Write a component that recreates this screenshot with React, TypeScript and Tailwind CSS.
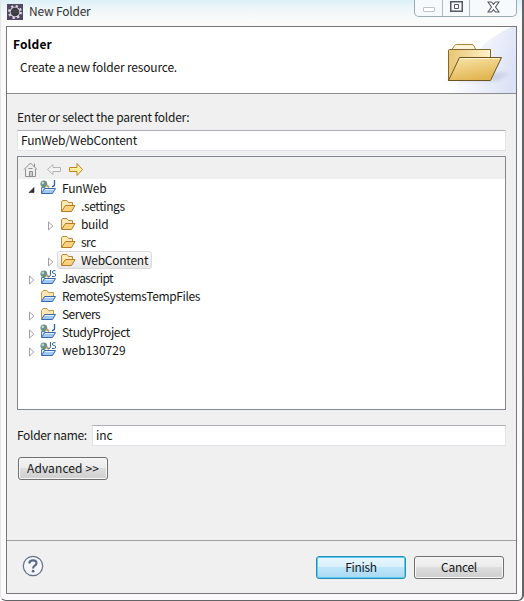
import type { ReactNode } from 'react';

type Kind = 'folder' | 'open' | 'J' | 'JS';
type Row = { name: string; kind: Kind; arrow: 'open' | 'closed' | 'none'; child?: boolean; selected?: boolean; spacing: string };

const rows: Row[] = [
  { name: 'FunWeb', kind: 'J', arrow: 'open', spacing: 'tracking-[-0.2px]' },
  { name: '.settings', kind: 'folder', arrow: 'none', child: true, spacing: 'tracking-[-0.4px]' },
  { name: 'build', kind: 'folder', arrow: 'closed', child: true, spacing: 'tracking-[-0.3px]' },
  { name: 'src', kind: 'folder', arrow: 'none', child: true, spacing: 'tracking-[-0.5px]' },
  { name: 'WebContent', kind: 'folder', arrow: 'closed', child: true, selected: true, spacing: 'tracking-[-0.25px]' },
  { name: 'Javascript', kind: 'JS', arrow: 'closed', spacing: 'tracking-[-0.65px]' },
  { name: 'RemoteSystemsTempFiles', kind: 'open', arrow: 'none', spacing: 'tracking-[-0.38px]' },
  { name: 'Servers', kind: 'open', arrow: 'closed', spacing: 'tracking-[-0.55px]' },
  { name: 'StudyProject', kind: 'J', arrow: 'closed', spacing: 'tracking-[-0.35px]' },
  { name: 'web130729', kind: 'JS', arrow: 'closed', spacing: '' },
];

function EclipseIcon() {
  return (
    <svg width="16" height="16" viewBox="0 0 16 16">
      <rect width="16" height="16" fill="#514765" />
      <circle cx="8" cy="8" r="6" fill="none" stroke="#d9d7df" strokeWidth="2" strokeDasharray="2.3 2.41" />
      <circle cx="8" cy="8" r="5.2" fill="#e7e5ea" />
      <circle cx="8" cy="8" r="4.4" fill="#3a3840" />
      <path d="M5 6.5h6M4.5 8.5h7" stroke="#56545c" strokeWidth=".7" />
    </svg>
  );
}

function BannerFolder() {
  return (
    <svg width="75" height="66" viewBox="0 0 75 66" className="shrink-0">
      <defs>
        <linearGradient id="glow" x1="0" y1=".3" x2="1" y2=".6">
          <stop offset=".2" stopColor="#fff" />
          <stop offset="1" stopColor="#dce2f6" />
        </linearGradient>
        <linearGradient id="front" x1="0" y1="0" x2=".4" y2="1">
          <stop offset="0" stopColor="#fbe7ad" />
          <stop offset="1" stopColor="#e2b653" />
        </linearGradient>
        <linearGradient id="back" x1="0" y1="0" x2="1" y2="0">
          <stop offset="0" stopColor="#e8c572" />
          <stop offset="1" stopColor="#fff1c9" />
        </linearGradient>
        <filter id="shade" x="-20%" y="-80%" width="140%" height="260%">
          <feGaussianBlur stdDeviation="2" />
        </filter>
      </defs>
      <path d="M75 0V66H5C35 46 20 24 70 0Z" fill="url(#glow)" />
      <path d="M4 54 L56 54 L68 46 L56 46 Z" fill="#96a0c0" opacity=".35" filter="url(#shade)" />
      <path d="M11 22.5 L13.5 18.5 Q14 17.5 15.5 17.5 L31 17.5 Q32.5 17.5 33 19 L35 23 Z" fill="#fff5d6" stroke="#a18542" />
      <path d="M7.5 53.5 V23.5 Q7.5 22.5 8.5 22.5 H49.5 V40 L20 53.5Z" fill="url(#back)" stroke="#806631" />
      <path d="M7.5 53.5 L18.5 30.5 H60.5 L49.5 53.5 Z" fill="url(#front)" stroke="#6e5421" />
      <path d="M19.5 31.5 H58.5" stroke="#fff5d5" />
    </svg>
  );
}

function TreeIcon({ kind }: { kind: Kind }) {
  if (kind === 'folder') {
    return (
      <svg width="16" height="16" viewBox="0 0 16 16" className="shrink-0">
        <path d="M1.5 13 V4 L2.5 2.5 H7 L8.5 4.5 H12.5 V8" fill="#ffeab6" stroke="#bd8537" />
        <path d="M1.5 13.5 L5.5 7.5 H15 L11.5 13.5 Z" fill="#fbd37c" stroke="#b77928" />
      </svg>
    );
  }
  return (
    <svg width="16" height="16" viewBox="0 0 16 16" className="shrink-0">
      {kind === 'open' ? (
        <path d="M1.5 13 V4.5 L3 2.5 H7 L8.5 4.5 H13.5 V9" fill="#ffe7b1" stroke="#c39852" />
      ) : (
        <>
          <path d="M1.5 13 V7.5 H5 L6 9 H13" fill="#e6f0fd" stroke="#5879b5" />
          <circle cx="3.8" cy="3.8" r="3.4" fill="#6d9289" />
          <circle cx="2.8" cy="2.8" r="1.4" fill="#bdd3ca" />
          <path d="M6.5 5 L9 7.3" stroke="#b99b4c" strokeWidth="1.8" />
          {kind === 'J' ? (
            <path d="M14.5 0V4.5Q14.5 6.5 12 6.5" fill="none" stroke="#315f9f" strokeWidth="1.3" />
          ) : (
            <path d="M10.5 0V4.5Q10.5 6.5 8.5 6.5M15.5 .7H13.5Q12.5 .7 12.5 2T13.5 3.5H14.5Q15.5 3.5 15.5 5T14.5 6.5H12" fill="none" stroke="#315f9f" />
          )}
        </>
      )}
      <path d="M1.5 13.5 L4.5 8.5 H15.5 L12.5 13.5 Z" fill="#a1c7f3" stroke="#3868b2" />
      <path d="M5 9.5 H14" stroke="#e2f0ff" />
    </svg>
  );
}

function Arrow({ state }: { state: Row['arrow'] }) {
  return (
    <svg width="8" height="10" viewBox="0 0 8 10" className="mt-[3px] shrink-0">
      {state === 'closed' && <path d="M1.5 1V9L5.8 5Z" fill="#fff" stroke="#a0a0a0" />}
      {state === 'open' && <path d="M1 7.5H6V2.5Z" fill="#333" stroke="#222" strokeWidth=".6" />}
    </svg>
  );
}

function Button({ children, primary = false }: { children: ReactNode; primary?: boolean }) {
  const skin = primary
    ? 'border-[#288cba] bg-[linear-gradient(#e7f7fe_0%,#d9f0fc_47%,#bee6fa_50%,#a9d9f2_100%)] shadow-[inset_0_0_0_1px_#5bcdf0]'
    : 'border-[#707070] bg-[linear-gradient(#f3f3f3_0%,#ebebeb_47%,#dddddd_50%,#cfcfcf_100%)] shadow-[inset_0_0_0_1px_#f7f7f7]';
  return <button className={`flex h-[23px] w-[90px] items-center justify-center rounded-[3px] border pb-px ${skin}`}>{children}</button>;
}

export default function App() {
  return (
    <div className="flex h-[601px] w-[524px] flex-col overflow-hidden rounded-b-[6px] border-r-2 border-b border-[#626466] border-l border-l-[#e5e5e5] bg-[linear-gradient(#dcf0f7_0px,#edf6fa_8px,#fafafa_20px,#fcfafc_100%)] pr-[5px] pl-[5px] font-['Noto_Sans_CJK_KR','Noto_Sans',sans-serif] text-[12px] leading-[18px] whitespace-pre text-[#161616]">
      <header className="flex h-[26px] shrink-0 justify-between">
        <div className="flex items-start pt-[4px] pl-px">
          <EclipseIcon />
          <span className="ml-[6px] -mt-[2px] tracking-[-0.2px] text-[#333]">New Folder</span>
        </div>
        <div className="flex h-[17px] w-[103px] rounded-b-[5px] border border-t-0 border-[#9babb4] bg-[#f7fafb]">
          <div className="flex w-[28px] items-center justify-center border-r border-[#aebbc2]">
            <span className="mt-[2px] h-[5px] w-[12px] rounded-[1px] border border-[#bdc4c9] bg-white" />
          </div>
          <div className="flex w-[27px] items-center justify-center border-r border-[#aebbc2]">
            <svg className="-mt-[3px]" width="13" height="11" viewBox="0 0 13 11"><path d="M.75 .75h11.5v9.5H.75z" fill="#fff" stroke="#535666" strokeWidth="1.5" /><path d="M4.5 3.5h4v4h-4z" fill="#fff" stroke="#535666" /></svg>
          </div>
          <div className="flex flex-1 items-center justify-center">
            <svg className="-mt-[3px]" width="13" height="12" viewBox="0 0 13 12"><path d="M1 1h3.5l2 2.4L8.5 1H12L8.5 6l3.5 5H8.5l-2-2.4L4.5 11H1l3.5-5Z" fill="#fff" stroke="#535666" strokeWidth="1.1" /></svg>
          </div>
        </div>
      </header>

      <main className="flex h-[568px] shrink-0 flex-col border border-[#777] bg-[#f0f0f0]">
        <section className="flex h-[67px] shrink-0 justify-between border-b border-[#8c8c8c] bg-white">
          <div className="pt-[8px] pl-[6px]">
            <h1 className="font-bold tracking-[0.15px] text-black">Folder</h1>
            <p className="mt-[5px] pl-[7px] tracking-[-0.18px]">Create a new folder resource.</p>
          </div>
          <BannerFolder />
        </section>

        <section className="flex h-[447px] shrink-0 flex-col border-b border-[#a0a0a0] pr-[10px] pl-[10px]">
          <label className="mt-[14px] h-[22px] tracking-[-0.24px]">Enter or select the parent folder:</label>
          <div className="h-[21px] border border-[#e0e3e7] border-t-[#abadb3] bg-white pl-[3px] tracking-[-0.24px]">FunWeb/WebContent</div>
          <div className="mt-[5px] h-[254px] border border-[#828790] bg-white">
            <div className="flex h-[22px] items-center bg-[#f0f0f0] pt-[3px] pl-[5px]">
              <svg width="16" height="16" viewBox="0 0 16 16"><path d="M1 7.5L7.5 1L14 7.5M2.5 7V14.5H12.5V7M11.5 1.5V5" fill="#eee" stroke="#8f8f8f" /><path d="M6.5 14V9.5H9.5V14M5.5 6.5h4" fill="#ccc" stroke="#8f8f8f" /></svg>
              <svg className="ml-[7px]" width="16" height="16" viewBox="0 0 16 16"><path d="M1.5 7.5L7 2.5V5.5H14.5V9.5H7V12.5Z" fill="#f3f3f3" stroke="#b4b4b4" /></svg>
              <svg className="ml-[6px]" width="16" height="16" viewBox="0 0 16 16"><path d="M14.5 7.5L9 1.5V5.5H1.5V9.5H9V13.5Z" fill="#ffef9f" stroke="#bd8529" /></svg>
            </div>
            {rows.map((row) => (
              <div key={row.name} className={`flex h-[18px] items-center ${row.child ? 'pl-[29px]' : 'pl-[10px]'}`}>
                <Arrow state={row.arrow} />
                <div className={`ml-[2px] flex h-[18px] items-center rounded-[3px] border pr-[3px] ${row.child ? 'pl-[2px]' : 'pl-px'} ${row.selected ? 'border-[#d9d9d9] bg-[linear-gradient(#fafafa,#e8e8e8)]' : 'border-transparent'}`}>
                  <TreeIcon kind={row.kind} />
                  <span className={`${row.child ? 'ml-[5px]' : 'ml-[6px]'} ${row.spacing}`}>{row.name}</span>
                </div>
              </div>
            ))}
          </div>
          <div className="mt-[15px] flex h-[21px] items-center">
            <label className="-mt-[2px] w-[75px] shrink-0 tracking-[-0.33px]">Folder name:</label>
            <div className="h-[21px] flex-1 border border-[#e0e3e7] border-t-[#abadb3] bg-white pl-[3px]">inc</div>
          </div>
          <div className="mt-[11px] ml-px tracking-[0.1px]"><Button>Advanced &gt;&gt;</Button></div>
        </section>

        <footer className="flex flex-1 items-start justify-between pt-[13px] pr-[12px] pl-[15px]">
          <svg className="mt-px" width="22" height="22" viewBox="0 0 22 22">
            <circle cx="11" cy="11" r="9.7" fill="#f5f7fb" stroke="#65718a" strokeWidth="1.2" />
            <path d="M7.4 8.5Q7.4 5.4 11 5.4T14.5 8.3Q14.5 9.8 12.5 10.9Q11.1 11.7 11.1 13.5" fill="none" stroke="#596b8c" strokeWidth="2.2" />
            <circle cx="11.1" cy="16.2" r="1.4" fill="#596b8c" />
          </svg>
          <div className="flex gap-[8px] pt-[2px] tracking-[-0.3px]"><Button primary>Finish</Button><Button>Cancel</Button></div>
        </footer>
      </main>
    </div>
  );
}
